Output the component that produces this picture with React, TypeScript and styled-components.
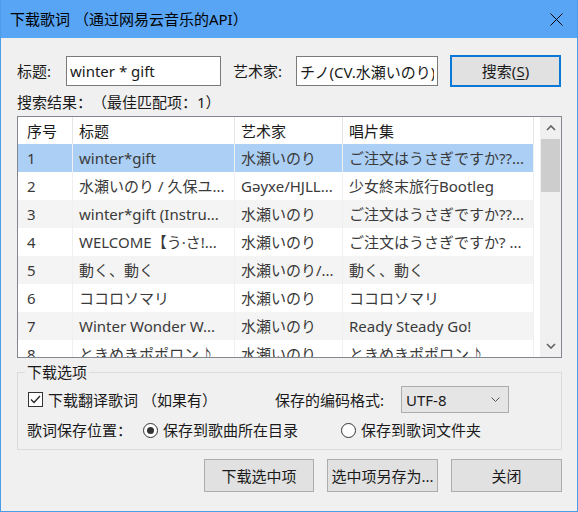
import React from 'react';
import styled, { createGlobalStyle } from 'styled-components';

const Global = createGlobalStyle`
  html, body { margin: 0; padding: 0; background: #ffffff; }
  body {
    font-family: "Noto Sans", "Noto Sans CJK SC", sans-serif;
    font-size: 15px;
    line-height: 20px;
    color: #1a1a1a;
    text-spacing-trim: space-all;
  }
  * { box-sizing: border-box; text-spacing-trim: space-all; }
`;

const Window = styled.div`
  width: 578px;
  height: 512px;
  display: flex;
  flex-direction: column;
  background: #f0f0f0;
  border: 1px solid #4c9de9;
  border-top: none;
  overflow: hidden;
`;

const TitleBar = styled.div`
  height: 38px;
  flex: none;
  display: flex;
  align-items: center;
  justify-content: space-between;
  padding: 0 14px 0 9px;
  background: #58a5f5;
  color: #000;
`;

const Body = styled.div`
  flex: 1;
  display: flex;
  flex-direction: column;
  padding: 17px 15px 0 16px;
`;

const SearchRow = styled.div`
  height: 32px;
  display: flex;
  align-items: center;
`;

const Label = styled.span<{ $w?: number; $ml?: number }>`
  flex: none;
  width: ${(p) => (p.$w ? `${p.$w}px` : 'auto')};
  margin-left: ${(p) => p.$ml ?? 0}px;
  white-space: nowrap;
`;

const TextInput = styled.input<{ $w: number }>`
  flex: none;
  width: ${(p) => p.$w}px;
  height: 30px;
  border: 1px solid #7a7a7a;
  background: #fff;
  padding: 0 3px;
  font: inherit;
  color: #1a1a1a;
  outline: none;
`;

const Button = styled.button<{ $primary?: boolean; $w: number; $h: number; $ml?: number }>`
  flex: none;
  width: ${(p) => p.$w}px;
  height: ${(p) => p.$h}px;
  margin-left: ${(p) => p.$ml ?? 0}px;
  background: #e1e1e1;
  border: ${(p) => (p.$primary ? '2px solid #0a78d6' : '1px solid #adadad')};
  font: inherit;
  color: #1a1a1a;
  padding: 0;
  white-space: nowrap;
  u { text-decoration: underline; text-underline-offset: 2px; }
`;

const ResultLabel = styled.div`
  margin-top: 5px;
  height: 20px;
  white-space: nowrap;
`;

const ListBox = styled.div`
  margin-top: 4px;
  height: 242px;
  border: 1px solid #828790;
  background: #fff;
  display: flex;
`;

const Table = styled.div`
  flex: 1;
  overflow: hidden;
  display: flex;
  flex-direction: column;
`;

const COLS = '55px 162px 108px 191px';

const HeaderRow = styled.div`
  flex: none;
  height: 27px;
  display: grid;
  grid-template-columns: ${COLS};
  background: #fff;
`;

const HeaderCell = styled.div<{ $first?: boolean }>`
  display: flex;
  align-items: center;
  padding-left: ${(p) => (p.$first ? 9 : 6)}px;
  border-right: 1px solid #e5e5e5;
  color: #1a1a1a;
  white-space: nowrap;
  overflow: hidden;
`;

const Row = styled.div<{ $bg: string }>`
  flex: none;
  height: 28px;
  width: 516px;
  display: grid;
  grid-template-columns: ${COLS};
  background: ${(p) => p.$bg};
`;

const Cell = styled.div<{ $first?: boolean }>`
  display: flex;
  align-items: center;
  padding-left: ${(p) => (p.$first ? 9 : 6)}px;
  border-right: 1px solid #f0f0f0;
  color: #3a3a3a;
  white-space: nowrap;
  overflow: hidden;
`;

const ScrollBar = styled.div`
  flex: none;
  width: 21px;
  background: #f0f0f0;
  display: flex;
  flex-direction: column;
`;

const ScrollArrow = styled.div`
  flex: none;
  height: 22px;
  display: flex;
  align-items: center;
  justify-content: center;
`;

const ScrollTrack = styled.div`
  flex: 1;
  display: flex;
  flex-direction: column;
`;

const Thumb = styled.div`
  flex: none;
  height: 53px;
  margin: 0 1px;
  background: #cdcdcd;
`;

const Group = styled.fieldset`
  margin: 4px 0 0 0;
  padding: 0 0 9px 0;
  border: 1px solid #dcdcdc;
  min-width: 0;
`;

const Legend = styled.legend`
  margin-left: 7px;
  padding: 0 2px;
  line-height: 20px;
  height: 20px;
`;

const OptRow = styled.div<{ $mt: number; $h: number }>`
  margin-top: ${(p) => p.$mt}px;
  height: ${(p) => p.$h}px;
  padding-left: 9px;
  display: flex;
  align-items: center;
`;

const CheckOption = styled.div`
  flex: none;
  width: 248px;
  display: flex;
  align-items: center;
  gap: 5px;
  white-space: nowrap;
`;

const CheckBox = styled.span`
  flex: none;
  width: 15px;
  height: 15px;
  margin-left: 1px;
  border: 1px solid #333;
  background: #fff;
  display: flex;
  align-items: center;
  justify-content: center;
`;

const SelectBox = styled.div`
  flex: none;
  width: 108px;
  height: 27px;
  background: #e5e5e5;
  border: 1px solid #acacac;
  display: flex;
  align-items: center;
  justify-content: space-between;
  padding: 0 8px 0 4px;
`;

const RadioOption = styled.div<{ $w?: number }>`
  flex: none;
  width: ${(p) => (p.$w ? `${p.$w}px` : 'auto')};
  display: flex;
  align-items: center;
  gap: 5px;
  white-space: nowrap;
`;

const RadioCircle = styled.span<{ $on?: boolean }>`
  flex: none;
  width: 15px;
  height: 15px;
  border-radius: 50%;
  border: 1px solid #333;
  background: #fff;
  display: flex;
  align-items: center;
  justify-content: center;
  &::after {
    content: '';
    display: ${(p) => (p.$on ? 'block' : 'none')};
    width: 7px;
    height: 7px;
    border-radius: 50%;
    background: #333;
  }
`;

const ButtonRow = styled.div`
  margin-top: 9px;
  display: flex;
  justify-content: flex-end;
  gap: 13px;
`;

type Song = { n: string; title: string; artist: string; album: string };

const songs: Song[] = [
  { n: '1', title: 'winter*gift', artist: '水瀬いのり', album: 'ご注文はうさぎですか??...' },
  { n: '2', title: '水瀬いのり / 久保ユ...', artist: 'Gəyxe/HJLL...', album: '少女終末旅行Bootleg' },
  { n: '3', title: 'winter*gift (Instru...', artist: '水瀬いのり', album: 'ご注文はうさぎですか??...' },
  { n: '4', title: 'WELCOME【う·さ!...', artist: '水瀬いのり', album: 'ご注文はうさぎですか? ...' },
  { n: '5', title: '動く、動く', artist: '水瀬いのり/...', album: '動く、動く' },
  { n: '6', title: 'ココロソマリ', artist: '水瀬いのり', album: 'ココロソマリ' },
  { n: '7', title: 'Winter Wonder W...', artist: '水瀬いのり', album: 'Ready Steady Go!' },
  { n: '8', title: 'ときめきポポロン♪', artist: '水瀬いのり', album: 'ときめきポポロン♪' },
];

const Chevron = ({ up }: { up?: boolean }) => (
  <svg width="10" height="6" viewBox="0 0 10 6">
    <polyline
      points={up ? '1,5 5,1 9,5' : '1,1 5,5 9,1'}
      fill="none"
      stroke="#606060"
      strokeWidth="1.6"
    />
  </svg>
);

export default function App() {
  return (
    <>
      <Global />
      <Window>
        <TitleBar>
          <span>下载歌词 （通过网易云音乐的API）</span>
          <svg width="13" height="13" viewBox="0 0 13 13">
            <path d="M0.5 0.5 L12.5 12.5 M12.5 0.5 L0.5 12.5" stroke="#000" strokeWidth="1" />
          </svg>
        </TitleBar>
        <Body>
          <SearchRow>
            <Label $w={49}>标题:</Label>
            <TextInput $w={155} readOnly value="winter * gift" />
            <Label $w={63} $ml={12}>艺术家:</Label>
            <TextInput $w={142} readOnly value="チノ(CV.水瀬いのり)" />
            <Button $primary $w={111} $h={32} $ml={12}>
              搜索(<u>S</u>)
            </Button>
          </SearchRow>
          <ResultLabel>搜索结果：（最佳匹配项：1）</ResultLabel>
          <ListBox>
            <Table>
              <HeaderRow>
                <HeaderCell $first>序号</HeaderCell>
                <HeaderCell>标题</HeaderCell>
                <HeaderCell>艺术家</HeaderCell>
                <HeaderCell>唱片集</HeaderCell>
              </HeaderRow>
              {songs.map((s, i) => (
                <Row key={s.n} $bg={i === 0 ? '#abcff5' : i % 2 === 0 ? '#f4f4f4' : '#ffffff'}>
                  <Cell $first>{s.n}</Cell>
                  <Cell>{s.title}</Cell>
                  <Cell>{s.artist}</Cell>
                  <Cell>{s.album}</Cell>
                </Row>
              ))}
            </Table>
            <ScrollBar>
              <ScrollArrow>
                <Chevron up />
              </ScrollArrow>
              <ScrollTrack>
                <Thumb />
              </ScrollTrack>
              <ScrollArrow>
                <Chevron />
              </ScrollArrow>
            </ScrollBar>
          </ListBox>
          <Group>
            <Legend>下载选项</Legend>
            <OptRow $mt={4} $h={27}>
              <CheckOption>
                <CheckBox>
                  <svg width="11" height="9" viewBox="0 0 11 9">
                    <polyline points="1,4.5 4,7.5 10,1" fill="none" stroke="#222" strokeWidth="1.3" />
                  </svg>
                </CheckBox>
                <span>下载翻译歌词 （如果有）</span>
              </CheckOption>
              <Label $w={126}>保存的编码格式:</Label>
              <SelectBox>
                <span>UTF-8</span>
                <svg width="9" height="5" viewBox="0 0 9 5">
                  <polyline points="0.5,0.5 4.5,4.5 8.5,0.5" fill="none" stroke="#555" strokeWidth="1" />
                </svg>
              </SelectBox>
            </OptRow>
            <OptRow $mt={7} $h={20}>
              <Label $w={116}>歌词保存位置：</Label>
              <RadioOption $w={198}>
                <RadioCircle $on />
                <span>保存到歌曲所在目录</span>
              </RadioOption>
              <RadioOption>
                <RadioCircle />
                <span>保存到歌词文件夹</span>
              </RadioOption>
            </OptRow>
          </Group>
          <ButtonRow>
            <Button $w={110} $h={33}>下载选中项</Button>
            <Button $w={111} $h={33}>选中项另存为...</Button>
            <Button $w={111} $h={33}>关闭</Button>
          </ButtonRow>
        </Body>
      </Window>
    </>
  );
}
